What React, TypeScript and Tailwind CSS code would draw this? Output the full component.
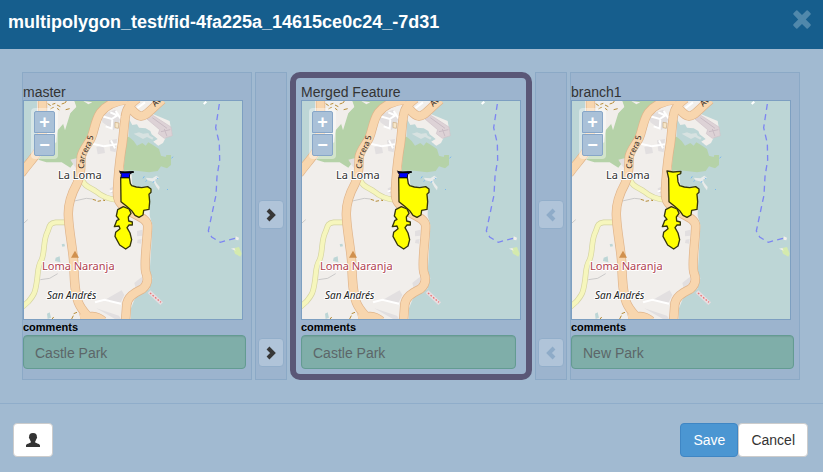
import { useId } from "react";

type Side = "master" | "merged" | "branch1";

const roads = [
  "M82 96 C84 150 82 190 80 225 C76 262 52 280 18 326",
  "M338 104 C300 108 272 122 256 143 C240 166 240 190 229 218 C218 240 204 252 199 274 C196 300 202 322 186 356 C166 392 159 420 160 450 C162 500 172 540 176 590 C178 640 178 680 190 712 C202 742 220 750 234 775",
  "M368 100 C346 116 334 130 331 155 C325 195 326 220 319 255 C312 300 309 340 307 380 C307 408 314 416 340 436 C364 454 396 458 398 482 C398 520 386 590 392 620 C400 640 400 658 382 672 C358 684 336 696 335 722 L331 775",
  "M340 128 C354 130 358 150 376 153 C392 156 404 136 442 104",
  "M196 760 C214 756 240 746 264 768",
];

const yellowRoads = [
  "M202 344 C206 364 228 368 244 380 C260 394 280 402 306 405",
  "M156 472 L122 472 C102 474 104 486 97 502 C84 528 90 560 80 584 C66 606 70 626 65 652 C60 686 56 690 40 710 L22 726",
];

const greens = [
  "M128 196 L150 170 L164 146 L184 126 L178 108 L330 108 L300 116 L262 140 L236 190 L222 222 L200 256 L184 284 L166 308 L140 292 L94 292 L70 284 L84 262 L120 236 Z",
  "M342 216 L356 228 L366 242 L382 234 L392 242 L400 232 L414 240 L432 252 L438 272 L452 276 L454 270 L468 270 L468 300 L456 310 L438 304 L428 318 L402 322 L352 316 L326 318 L332 214 Z",
];

const tracks =
  "M98 116 l9 6 M112 118 l9 -3 M126 120 l10 5 M140 117 l9 -3 M106 132 l10 -5 M126 130 l7 5 M152 134 l12 -3 M150 114 l4 -6 M233 403 l10 3 M248 409 l10 -2 M264 405 l6 2 M170 762 l5 -10 M176 746 l10 -4 M116 756 l-6 8";

function Halo({ x, y, className, children }: { x: number; y: number; className: string; children: string }) {
  return (
    <text x={x} y={y} stroke="#ffffff" strokeWidth="2" strokeLinejoin="round" paintOrder="stroke" className={className}>
      {children}
    </text>
  );
}

function MapDrawing({ side }: { side: Side }) {
  const id = useId();
  return (
    <svg viewBox="0 0 218 218" className="block h-auto w-full bg-[#bdd6d6] font-['Noto_Sans',sans-serif]" role="img" aria-label={`Map of ${side}`}>
      <defs>
        <path id={id} d="M60 68 C60 59 61 54 65 48 C68 42 69 38 70 30" />
      </defs>
      <g transform="translate(-9 -36) scale(0.33333)">
        <path fill="#f1eeeb" d="M66 108 L444 108 L408 145 L464 168 L471 210 L454 214 L444 234 L430 242 L414 230 L424 222 L402 206 L340 218 L336 310 L350 330 L352 365 L405 375 L404 452 L412 480 L408 560 L404 620 L412 640 L403 672 L360 700 L348 730 L347 762 L27 762 L27 312 L62 276 L66 230 Z" />
        <path fill="#bdd6d6" d="M342 162 L352 180 L366 178 L372 188 L392 190 L406 198 L410 208 L428 222 L414 230 L424 238 L412 240 L400 232 L392 242 L382 234 L366 242 L356 228 L340 216 Z" />
        {greens.map((d) => <path key={d} d={d} fill="#b5d2a8" />)}
        <path fill="#f1eeeb" d="M356 206 L372 202 L384 206 L400 204 L404 212 L416 218 L412 224 L396 216 L384 222 L366 212 Z" opacity="0.5" />
        <path fill="#f1eeeb" d="M96 108 L176 108 L182 122 L166 144 L158 170 L150 196 L142 168 L126 196 L124 232 L112 236 L96 210 Z M205 108 L232 112 L220 118 Z" />
        <path fill="#ddd2d6" stroke="#cfc3c9" strokeWidth="2" d="M406 146 L468 186 L472 212 L448 220 L430 206 L434 194 L396 162 Z" />
        <path fill="none" stroke="#c9bcc4" strokeWidth="3" d="M412 158 L456 190 M438 200 L466 194 M448 192 L456 214" />
        <g fill="#e2dfe0">
          <path d="M258 150 L300 134 L318 160 L296 196 L262 172 Z M244 246 L266 240 L270 264 L248 268 Z M282 226 L306 222 L302 262 L286 258 Z M366 498 L382 494 L382 512 L366 514 Z M368 524 L380 522 L378 536 L366 534 Z M358 654 L380 636 L384 652 L362 670 Z M270 704 L320 676 L328 690 L316 714 L286 710 Z M166 284 L190 278 L188 316 L176 300 Z M244 730 L312 752 L318 762 L300 762 Z M284 370 L304 362 L302 382 L286 384 Z" />
        </g>
        <g fill="none" stroke="#ffffff" strokeWidth="6">
          <path d="M262 154 L290 162 L312 148 M286 142 L304 150 M272 184 L290 190 L292 164 M302 138 L320 166 M232 236 L266 244 L306 238 M288 226 L300 250 M366 130 L390 112 M240 712 L268 704 L318 716 M284 380 L302 374" />
          <path d="M566 117 L574 110" />
        </g>
        <path fill="#e9ebea" d="M392 338 L412 340 L424 332 L432 338 L420 344 L424 354 L434 366 L432 376 L424 366 L416 350 L398 346 Z" />
        <g fill="none" stroke="#b6b6b8" strokeWidth="2">
          <path d="M178 408 L214 400 L232 402 M27 474 L38 464 M76 644 L104 640 L128 626 M276 400 L304 394" />
        </g>
        <path fill="#f8e7c9" stroke="#c9ab82" strokeWidth="2" d="M300 172 L312 174 L310 190 L300 188 Z" />
        <path fill="#bdd6d6" d="M122 578 L134 574 L136 592 L120 588 Z M140 538 l8 -2 l2 8 l-8 1 Z M96 746 l8 -4 l4 16 l-10 4 Z" />
        {yellowRoads.map((d) => (
          <g key={d} fill="none">
            <path d={d} stroke="#d4d3a0" strokeWidth="17" />
            <path d={d} stroke="#f6f6bd" strokeWidth="13" />
          </g>
        ))}
        {roads.map((d) => <path key={d} d={d} fill="none" stroke="#dfb48b" strokeWidth="28" />)}
        {roads.map((d) => <path key={d} d={d} fill="none" stroke="#f8d6ae" strokeWidth="24" />)}
        <path d={tracks} fill="none" stroke="#b58b35" strokeWidth="3" />
        <path d="M402 680 L440 716" fill="none" stroke="#e7dde0" strokeWidth="12" />
        <path d="M405 684 L438 712" fill="none" stroke="#ec7474" strokeWidth="4" strokeDasharray="5 5" />
        <path d="M384 340 l4 -6 M392 350 l3 -4 M413 352 l5 -3 M426 338 l3 4 M456 372 l3 3 M470 280 l4 -5" stroke="#78b8ee" strokeWidth="3" />
        <path d="M655 550 L672 546 L680 566 L676 575 L660 566 Z" fill="#d4eaae" />
        <path d="M648 551 l10 -2 l4 8 M662 514 l10 4 l-2 8 l-8 -2 Z" fill="#f1eeeb" />
        <path d="M613 117 L602 188 L613 235 L614 285 L606 335 L603 390 L580 498 L590 516 L616 532 L640 525 L668 518" fill="none" stroke="#7d86f2" strokeWidth="4" strokeDasharray="18 13" />
        <path d="M180 557 L192 578 L168 578 Z" fill="#d0904e" />
        <g fill="#ffff00" stroke="#35350a" strokeWidth="4" strokeLinejoin="round">
          {side === "branch1" ? (
            <path d="M312 318 L330 321 L354 319 L353 326 L343 330 L345 350 L350 362 L364 366 L380 368 L398 365 L408 372 L408 382 L402 388 L404 410 L402 433 L386 436 L384 450 L372 457 L360 451 L350 437 L335 424 L318 410 L317 340 Z" />
          ) : (
            <path d="M317 338 L343 338 L346 356 L350 362 L364 366 L380 368 L398 365 L408 372 L408 382 L402 388 L404 410 L402 433 L386 436 L384 450 L372 457 L360 451 L350 437 L335 424 L318 410 Z" />
          )}
          <path d="M308 434 L325 425 L342 432 L348 445 L340 456 L341 468 L352 471 L352 480 L342 480 L336 488 L345 504 L350 524 L345 543 L332 552 L314 540 L300 514 L302 502 L315 491 L312 483 L298 485 L305 467 L312 463 L304 453 Z" />
        </g>
        {side !== "branch1" && (
          <>
            <path d="M314 320 L330 321 L354 320 L344 328 L343 338 L318 338 L319 328 Z" fill="#0000ff" stroke="#0a0a14" strokeWidth="3" strokeLinejoin="round" />
            <path d="M311 316 L320 320 L357 319 L357 323 L346 325 L320 325 Z" fill="#050505" />
          </>
        )}
      </g>
      <text className="fill-[#2b241c] text-[8px]">
        <textPath href={`#${id}`}>Carrera 5</textPath>
      </text>
      <text transform="translate(131 6) rotate(-42)" className="fill-[#2b241c] text-[8px]">Av</text>
      <Halo x={34} y={78} className="fill-[#333333] text-[11px]">La Loma</Halo>
      <Halo x={18} y={169} className="fill-[#b0414f] text-[11px]">Loma Naranja</Halo>
      <Halo x={23} y={198} className="fill-[#222222] text-[10px] italic">San Andrés</Halo>
    </svg>
  );
}

function FeatureMap({ side }: { side: Side }) {
  const zoomButton =
    "flex h-[22px] w-[21px] items-center justify-center border border-[#87a6c8] bg-[#aac1d8] text-lg leading-none font-bold text-white";
  return (
    <div className="relative border border-[#7d9fc1]">
      <MapDrawing side={side} />
      <div className="absolute top-[7px] left-[7px] flex flex-col gap-px rounded bg-white/40 p-[3px]">
        <button type="button" aria-label="Zoom in" className={`${zoomButton} rounded-t-xs`}>+</button>
        <button type="button" aria-label="Zoom out" className={`${zoomButton} rounded-b-xs`}>−</button>
      </div>
    </div>
  );
}

function FeaturePanel({ side, title, comments }: { side: Side; title: string; comments: string }) {
  const merged = side === "merged";
  return (
    <section
      className={
        merged
          ? "rounded-[10px] border-[6px] border-[#5a5777] bg-[#9cb4ce] px-[5px] pt-[6px] pb-[5px]"
          : "border border-[#8ba9c6] bg-[#9cb4ce] pt-[11px] pr-[5px] pb-[10px]"
      }
    >
      <h2 className="text-sm leading-4 text-[#333333]">{title}</h2>
      <div className={merged ? "" : "pr-[3px]"}>
        <FeatureMap side={side} />
      </div>
      <div className={merged ? "pr-[5px]" : ""}>
        <label htmlFor={`${side}-comments`} className="block text-[11px] leading-[15px] font-bold text-black">
          comments
        </label>
        <input
          id={`${side}-comments`}
          type="text"
          defaultValue={comments}
          className="block h-[34px] w-full rounded border border-[#639b92] bg-[#7faea9] px-[11px] pt-px text-sm text-[#5c6668] shadow-[inset_0_1px_1px_rgba(0,0,0,0.08)] outline-none"
        />
      </div>
    </section>
  );
}

function ChevronButton({ direction, label }: { direction: "left" | "right"; label: string }) {
  const left = direction === "left";
  return (
    <button
      type="button"
      aria-label={label}
      disabled={left}
      className={`flex h-[29px] w-[26px] items-center justify-center rounded border border-[#92aeca] bg-[#b0c4d9] ${left ? "text-[#8eabc8]" : "text-[#373737]"}`}
    >
      <svg viewBox="0 0 12 14" className="h-[14px] w-3" fill="none" stroke="currentColor" strokeWidth="4">
        <path d={left ? "M9 2 L4 7 L9 12" : "M3 2 L8 7 L3 12"} />
      </svg>
    </button>
  );
}

function TransferColumn({ direction, source }: { direction: "left" | "right"; source: string }) {
  return (
    <div className="flex flex-col items-center justify-between border border-[#8ba9c6] bg-[#9cb4ce] pt-[127px] pb-3">
      <ChevronButton direction={direction} label={`Use geometry from ${source}`} />
      <ChevronButton direction={direction} label={`Use comments from ${source}`} />
    </div>
  );
}

export default function App() {
  return (
    <div className="min-h-screen bg-[#a1bad1] font-['Liberation_Sans',Arial,sans-serif]">
      <header className="flex h-[49px] items-start justify-between bg-[#165e8d] pt-[10px] pr-3 pl-2">
        <h1 className="text-lg leading-6 font-bold text-white">multipolygon_test/fid-4fa225a_14615ce0c24_-7d31</h1>
        <button type="button" aria-label="Close" className="text-[#5088ab]">
          <svg viewBox="0 0 18 19" className="h-[19px] w-[18px]" fill="currentColor">
            <path d="M4.4 .4 L9 5 L13.6 .4 Q14.2 0 14.8 .4 L17.6 3.2 Q18 3.9 17.6 4.6 L12.8 9.5 L17.6 14.3 Q18 15 17.6 15.7 L14.8 18.6 Q14.2 19 13.6 18.6 L9 14 L4.4 18.6 Q3.8 19 3.2 18.6 L.4 15.7 Q0 15 .4 14.3 L5.2 9.5 L.4 4.6 Q0 3.9 .4 3.2 L3.2 .4 Q3.8 0 4.4 .4 Z" />
          </svg>
        </button>
      </header>
      <main className="grid grid-cols-[230fr_32px_242fr_32px_230fr] gap-[3px] border-b border-[#8fadca] pt-[23px] pr-[23px] pb-[23px] pl-[22px]">
        <FeaturePanel side="master" title="master" comments="Castle Park" />
        <TransferColumn direction="right" source="master" />
        <FeaturePanel side="merged" title="Merged Feature" comments="Castle Park" />
        <TransferColumn direction="left" source="branch1" />
        <FeaturePanel side="branch1" title="branch1" comments="New Park" />
      </main>
      <footer className="flex items-center justify-between pt-[19px] pr-[15px] pb-[15px] pl-[13px]">
        <button type="button" aria-label="Author" className="flex h-[34px] w-10 items-center justify-center rounded border border-[#cccccc] bg-white text-[#333333]">
          <svg viewBox="0 0 14 14" className="size-[14px]" fill="currentColor">
            <path d="M7 0 C9.8 0 11 1.4 10.9 3.8 C11.3 4.4 11.1 5.4 10.5 5.8 C10.2 7 9.6 7.8 9.2 8.4 V9.4 C10.5 10.2 14 10.9 14 12.4 V14 H0 V12.4 C0 10.9 3.5 10.2 4.8 9.4 V8.4 C4.4 7.8 3.8 7 3.5 5.8 C2.9 5.4 2.7 4.4 3.1 3.8 C3 1.4 4.2 0 7 0 Z" />
          </svg>
        </button>
        <div className="flex">
          <button type="button" className="h-[34px] rounded border border-[#3f86c4] bg-[#4b96d2] px-3 text-sm text-white">Save</button>
          <button type="button" className="h-[34px] rounded border border-[#cccccc] bg-white px-3 text-sm text-[#333333]">Cancel</button>
        </div>
      </footer>
    </div>
  );
}
